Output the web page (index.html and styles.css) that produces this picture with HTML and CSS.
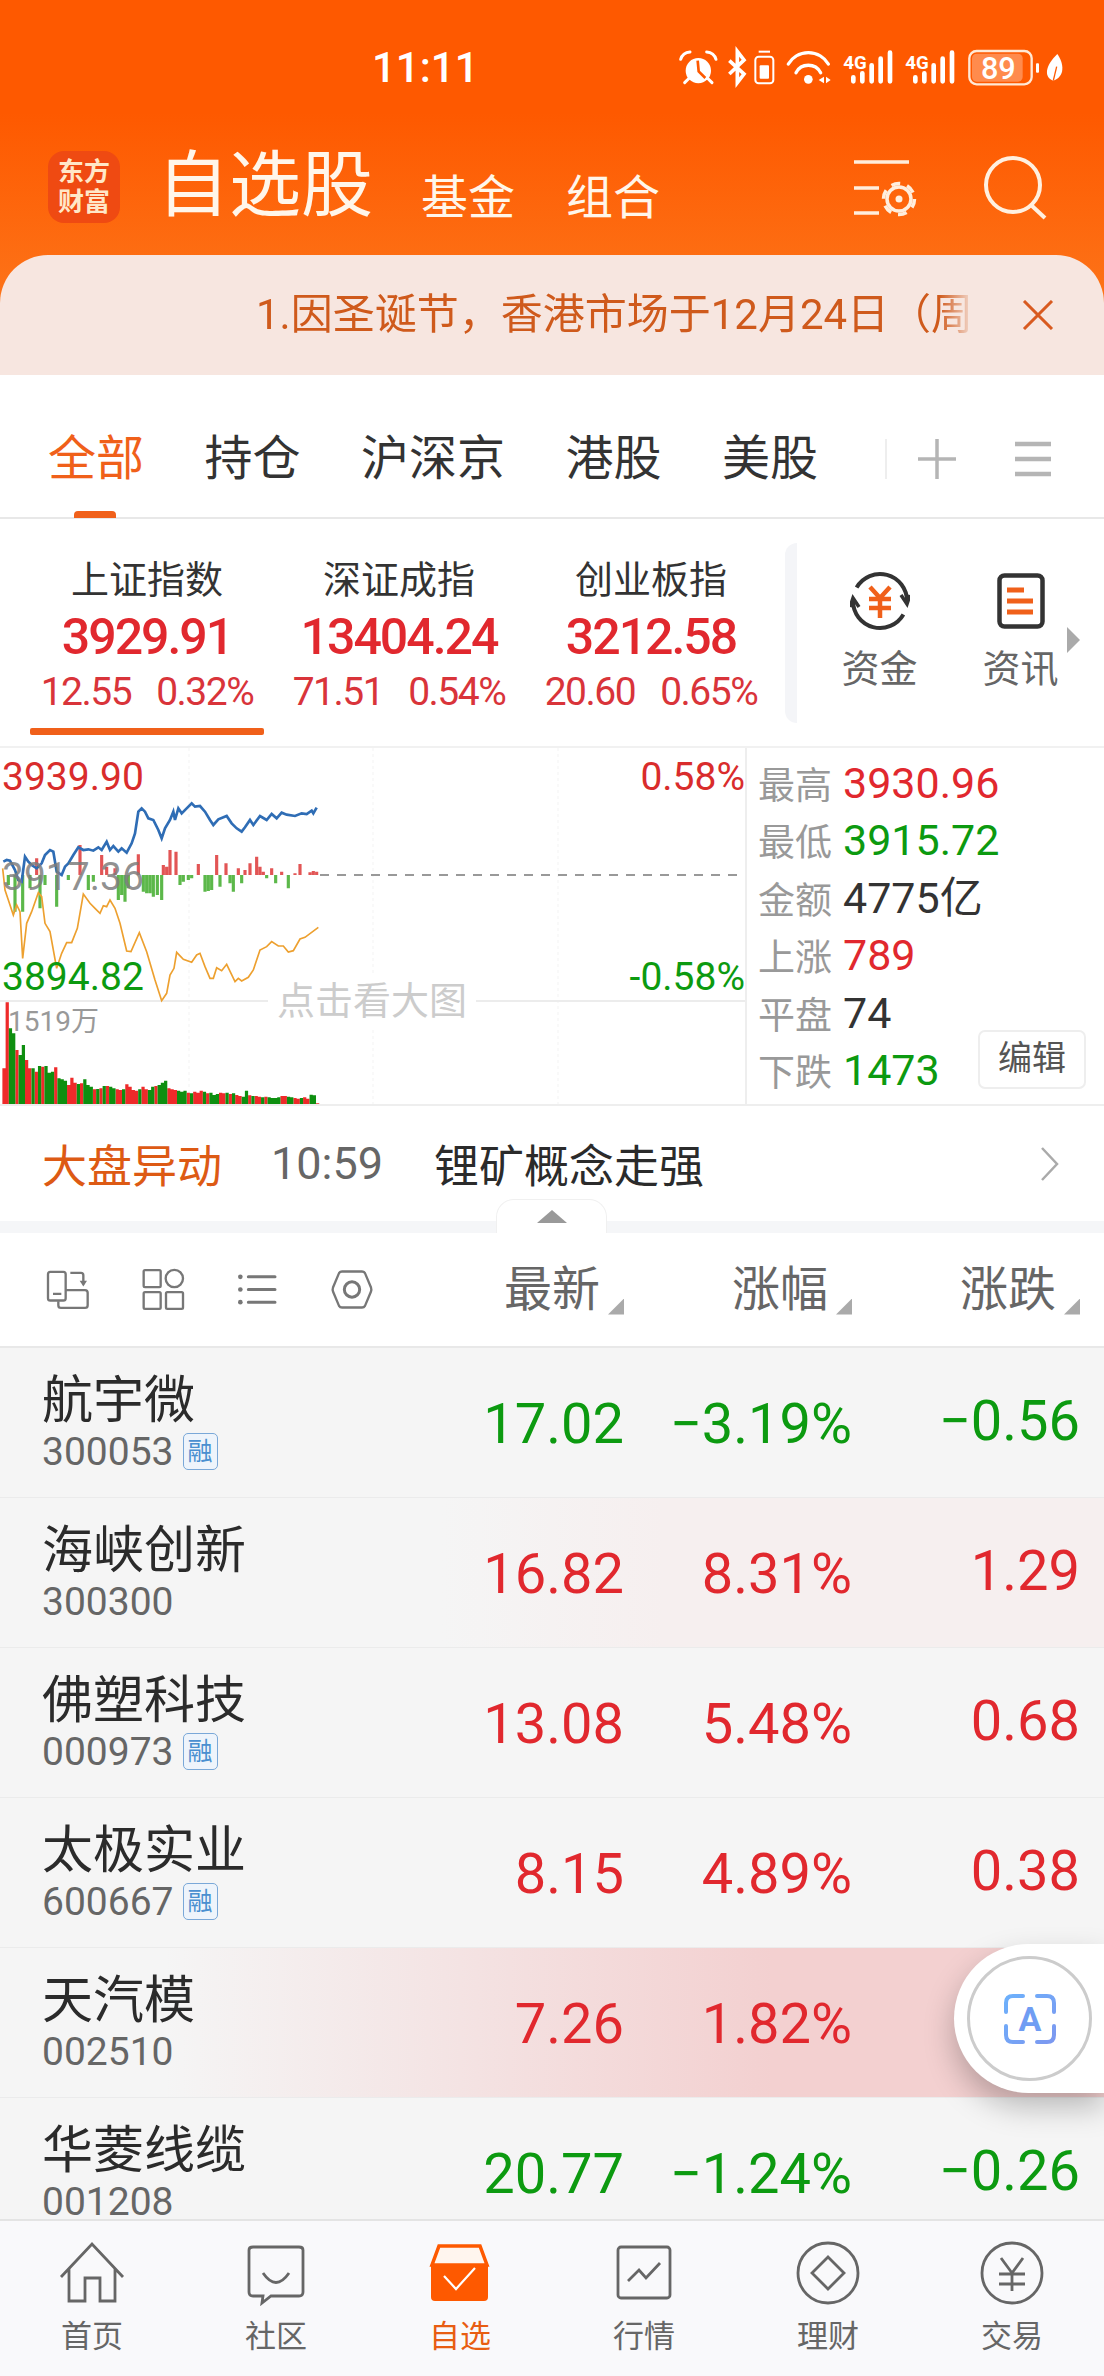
FILE: index.html
```html
<!DOCTYPE html>
<html lang="zh-CN">
<head>
    <meta charset="UTF-8">
    <meta name="viewport" content="width=device-width, initial-scale=1.0">
    <title>自选股</title>
    <link rel="stylesheet" href="styles.css">
</head>
<body>
    <div class="app">
        <header class="top">
            <div class="status">
                <span class="time">11:11</span>
                <svg class="status-icons" viewBox="0 0 1260 180">
                    <!-- alarm -->
                    <circle cx="115" cy="92" r="38" fill="#fff"/>
                    <path d="M113 62 L116 94 L136 114" fill="none" stroke="#fe5900" stroke-width="8"/>
                    <path d="M62 58 Q68 38 90 36 M140 36 Q162 38 168 58 M74 128 L88 114 M156 128 L142 114" fill="none" stroke="#fff" stroke-width="9" stroke-linecap="round"/>
                    <!-- bluetooth + small battery -->
                    <path d="M208 62 L252 102 L232 128 V34 L252 60 L208 102" fill="none" stroke="#fff" stroke-width="11"/>
                    <rect x="286" y="50" width="54" height="80" rx="10" fill="none" stroke="#fff" stroke-width="6"/>
                    <rect x="299" y="76" width="28" height="40" rx="3" fill="#fff"/>
                    <path d="M296 35 H330" stroke="#fff" stroke-width="6"/>
                    <!-- wifi -->
                    <path d="M385 72 A70 70 0 0 1 505 72 M408 98 A42 42 0 0 1 482 98" fill="none" stroke="#fff" stroke-width="10" stroke-linecap="round"/>
                    <circle cx="445" cy="118" r="13" fill="#fff"/>
                    <path d="M492 110 V130 L476 120 Z M498 110 V130 L512 120 Z" fill="#fff"/>
                    <!-- two sims -->
                    <g>
                        <text x="550" y="86" class="sim-label">4G</text>
                        <path d="M580 112 V124 M607 100 V124 M635 76 V124 M662 56 V124 M690 38 V124" stroke="#fff" stroke-width="14" stroke-linecap="round"/>
                    </g>
                    <g transform="translate(186 0)">
                        <text x="550" y="86" class="sim-label">4G</text>
                        <path d="M580 112 V124 M607 100 V124 M635 76 V124 M662 56 V124 M690 38 V124" stroke="#fff" stroke-width="14" stroke-linecap="round"/>
                    </g>
                    <!-- battery -->
                    <rect x="928" y="33" width="187" height="100" rx="22" fill="none" stroke="#ffe9d6" stroke-width="7"/>
                    <rect x="936" y="41" width="152" height="84" rx="14" fill="#ff8b4d"/>
                    <text x="1015" y="116" text-anchor="middle" class="batt-label">89</text>
                    <rect x="1128" y="70" width="9" height="28" rx="3" fill="#fff"/>
                    <path d="M1192 42 C1212 70 1216 110 1180 122 C1150 112 1156 76 1192 42 Z" fill="#fff"/>
                    <path d="M1180 122 L1190 80" stroke="#fe5900" stroke-width="4"/>
                </svg>
            </div>
            <div class="titlebar">
                <div class="logo">东方<br>财富</div>
                <div class="title-tabs">
                    <span class="title-main">自选股</span>
                    <span class="title-sub">基金</span>
                    <span class="title-sub">组合</span>
                </div>
                <svg class="ico-set" width="70" height="62" viewBox="0 0 70 62">
                    <path d="M0 3 H55 M0 29 H25 M0 54 H25" stroke="#ffeedd" stroke-width="3.5"/>
                    <circle cx="45" cy="40" r="12" fill="none" stroke="#ffeedd" stroke-width="3.5"/>
                    <circle cx="45" cy="40" r="15.5" fill="none" stroke="#ffeedd" stroke-width="3.5" stroke-dasharray="9 7.2"/>
                    <circle cx="45" cy="40" r="3.5" fill="#ffeedd"/>
                </svg>
                <svg class="ico-search" width="66" height="66" viewBox="0 0 66 66">
                    <circle cx="30" cy="31" r="27" fill="none" stroke="#fff0e0" stroke-width="4"/>
                    <path d="M48 51 L62 64" stroke="#fff0e0" stroke-width="4"/>
                </svg>
            </div>
            <div class="notice">
                <div class="notice-text">1.因圣诞节，香港市场于12月24日（周</div>
                <svg class="notice-close" width="32" height="30" viewBox="0 0 32 30">
                    <path d="M2 1 L30 29 M30 1 L2 29" stroke="#d85a20" stroke-width="3"/>
                </svg>
            </div>
        </header>

        <nav class="tabs">
            <span class="tab active">全部</span>
            <span class="tab">持仓</span>
            <span class="tab">沪深京</span>
            <span class="tab">港股</span>
            <span class="tab">美股</span>
            <i class="tab-sep"></i>
            <svg class="tab-plus" width="40" height="40" viewBox="0 0 40 40">
                <path d="M20 0 V40 M1 20 H39" stroke="#b5b5b5" stroke-width="3.5"/>
            </svg>
            <svg class="tab-menu" width="36" height="36" viewBox="0 0 36 36">
                <path d="M0 3 H36 M0 18 H36 M0 33 H36" stroke="#b5b5b5" stroke-width="4.5"/>
            </svg>
        </nav>

        <section class="indexes">
            <div class="idx idx-on">
                <div class="idx-name">上证指数</div>
                <div class="idx-num">3929.91</div>
                <div class="idx-sub"><span>12.55</span><span>0.32%</span></div>
            </div>
            <div class="idx">
                <div class="idx-name">深证成指</div>
                <div class="idx-num">13404.24</div>
                <div class="idx-sub"><span>71.51</span><span>0.54%</span></div>
            </div>
            <div class="idx">
                <div class="idx-name">创业板指</div>
                <div class="idx-num">3212.58</div>
                <div class="idx-sub"><span>20.60</span><span>0.65%</span></div>
            </div>
            <i class="idx-sep"></i>
            <div class="quick">
                <svg width="60" height="60" viewBox="0 0 60 60">
                    <path d="M6.6 16.5 A27 27 0 0 1 57 30 M53.4 43.5 A27 27 0 0 1 3 30" fill="none" stroke="#333" stroke-width="4"/>
                    <path d="M51 24 L57 33 L60 24 M9 36 L3 27 L0 36" fill="none" stroke="#333" stroke-width="3.5"/>
                    <path d="M20 16 L30 27 L40 16 M19 28 H41 M19 37 H41 M30 27 V47" fill="none" stroke="#f0601a" stroke-width="4.5"/>
                </svg>
                <span>资金</span>
            </div>
            <div class="quick">
                <svg width="48" height="56" viewBox="0 0 48 56">
                    <rect x="2.5" y="2.5" width="43" height="51" rx="5" fill="none" stroke="#333" stroke-width="4.5"/>
                    <path d="M10 17 H27 M10 28 H36 M10 39 H36" stroke="#f0601a" stroke-width="5"/>
                </svg>
                <span>资讯</span>
            </div>
            <i class="quick-more"></i>
        </section>

        <section class="market">
            <div class="chart">
                <svg class="chart-svg" width="745" height="357" viewBox="0 0 745 357">
                    <path d="M189 0 V357 M373 0 V357 M558 0 V357" stroke="#f3f3f3" stroke-dasharray="3 3"/>
                    <path d="M0 253 H745" stroke="#ececec" stroke-width="2"/>
                    <path d="M320 127 H745" stroke="#999" stroke-width="2" stroke-dasharray="9 8"/>
                    <g transform="translate(0 -8) scale(.33333)">
                        <path id="diff-up" stroke="#e25555" stroke-width="9.5"/>
                        <path id="diff-down" stroke="#5cb84a" stroke-width="9.5"/>
                        <path id="vol-red" stroke="#ee2a2a" stroke-width="9.7"/>
                        <path id="vol-green" stroke="#0e8f10" stroke-width="9.7"/>
                        <polyline class="line-blue" points="10,365 20,360 30,362 45,390 55,420 65,425 75,350 85,365 95,375 110,385 125,370 135,345 150,330 160,335 170,395 185,405 195,380 205,370 220,345 235,322 250,330 265,328 280,332 295,322 305,330 320,305 330,330 340,318 355,335 365,325 380,338 395,310 405,280 415,215 425,205 435,215 445,235 460,240 475,270 485,295 495,265 510,240 520,215 525,240 535,205 545,220 560,205 575,190 585,200 600,198 615,215 630,240 640,255 655,238 680,228 695,250 710,265 725,275 735,262 750,240 760,255 780,228 800,240 815,222 830,235 845,218 860,224 885,228 905,220 920,222 935,212 940,220 950,203"/>
                        <polyline class="line-orange" points="8,385 15,450 25,480 40,525 50,495 60,515 68,655 80,550 95,515 115,458 125,470 135,550 150,575 170,685 185,640 200,608 215,608 232,565 250,462 270,490 285,505 300,520 310,497 320,500 330,480 345,505 360,550 380,633 393,635 418,578 440,635 465,720 485,782 500,760 510,705 522,685 530,637 550,658 575,667 590,645 600,640 615,680 630,715 640,715 650,683 665,692 680,673 705,725 715,715 725,723 745,712 760,690 780,630 800,620 815,605 835,618 850,618 865,636 880,632 900,597 915,592 955,562"/>
                    </g>
                </svg>
                <span class="lab lab-hi">3939.90</span>
                <span class="lab lab-mid">3917.36</span>
                <span class="lab lab-lo">3894.82</span>
                <span class="lab lab-hi-pct">0.58%</span>
                <span class="lab lab-lo-pct">-0.58%</span>
                <span class="lab lab-vol">1519万</span>
                <span class="lab lab-big">点击看大图</span>
            </div>
            <div class="stats">
                <div class="stat"><label>最高</label><b class="up">3930.96</b></div>
                <div class="stat"><label>最低</label><b class="down">3915.72</b></div>
                <div class="stat"><label>金额</label><b>4775亿</b></div>
                <div class="stat"><label>上涨</label><b class="up">789</b></div>
                <div class="stat"><label>平盘</label><b>74</b></div>
                <div class="stat"><label>下跌</label><b class="down">1473</b></div>
                <div class="edit-btn">编辑</div>
            </div>
        </section>

        <div class="alert">
            <span class="alert-tag">大盘异动</span>
            <span class="alert-time">10:59</span>
            <span class="alert-text">锂矿概念走强</span>
            <svg class="alert-arrow" width="20" height="34" viewBox="0 0 20 34">
                <path d="M2 1 L17 17 L2 33" fill="none" stroke="#aaa" stroke-width="2.5"/>
            </svg>
        </div>

        <div class="strip">
            <div class="fold"><i></i></div>
        </div>

        <div class="list-head">
            <div class="head-icons">
                <svg width="50" height="47" viewBox="130 80 150 140">
                    <rect x="145" y="97" width="53" height="86" rx="7"/>
                    <path d="M160 163 H185 M176 185 V197 Q176 205 184 205 H256 Q264 205 264 197 V160 Q264 152 256 152 H198 M212 100 H244 Q251 100 251 107 V134"/>
                    <path class="fill" d="M240 124 H262 L251 141 Z"/>
                </svg>
                <svg width="50" height="47" viewBox="410 80 150 140">
                    <rect x="427" y="92" width="51" height="51" rx="4"/>
                    <circle cx="519" cy="117" r="26"/>
                    <rect x="427" y="158" width="51" height="50" rx="4"/>
                    <rect x="494" y="158" width="51" height="50" rx="4"/>
                </svg>
                <svg width="50" height="47" viewBox="693 80 150 140">
                    <path class="thick" d="M742 112 H822 M742 150 H822 M742 188 H822"/>
                    <circle class="fill" cx="718" cy="112" r="7"/>
                    <circle class="fill" cx="718" cy="150" r="7"/>
                    <circle class="fill" cx="718" cy="188" r="7"/>
                </svg>
                <svg width="50" height="47" viewBox="975 80 150 140">
                    <path d="M1020 96 H1080 Q1086 96 1089 101 L1107 144 Q1109 150 1107 156 L1089 199 Q1086 204 1080 204 H1020 Q1014 204 1011 199 L993 156 Q991 150 993 144 L1011 101 Q1014 96 1020 96 Z"/>
                    <circle class="thick" cx="1050" cy="150" r="23"/>
                </svg>
            </div>
            <div class="head-col">最新<i></i></div>
            <div class="head-col">涨幅<i></i></div>
            <div class="head-col">涨跌<i></i></div>
        </div>

        <div class="list">
            <div class="row">
                <div class="stock"><div class="stock-name">航宇微</div><div class="stock-code">300053<em>融</em></div></div>
                <div class="val down">17.02</div><div class="val down">−3.19%</div><div class="val last down">−0.56</div>
            </div>
            <div class="row row-warm">
                <div class="stock"><div class="stock-name">海峡创新</div><div class="stock-code">300300</div></div>
                <div class="val up">16.82</div><div class="val up">8.31%</div><div class="val last up">1.29</div>
            </div>
            <div class="row">
                <div class="stock"><div class="stock-name">佛塑科技</div><div class="stock-code">000973<em>融</em></div></div>
                <div class="val up">13.08</div><div class="val up">5.48%</div><div class="val last up">0.68</div>
            </div>
            <div class="row">
                <div class="stock"><div class="stock-name">太极实业</div><div class="stock-code">600667<em>融</em></div></div>
                <div class="val up">8.15</div><div class="val up">4.89%</div><div class="val last up">0.38</div>
            </div>
            <div class="row row-hot">
                <div class="stock"><div class="stock-name">天汽模</div><div class="stock-code">002510</div></div>
                <div class="val up">7.26</div><div class="val up">1.82%</div><div class="val last up"></div>
            </div>
            <div class="row">
                <div class="stock"><div class="stock-name">华菱线缆</div><div class="stock-code">001208</div></div>
                <div class="val down">20.77</div><div class="val down">−1.24%</div><div class="val last down">−0.26</div>
            </div>
        </div>

        <nav class="bottom">
            <div class="nav-item">
                <svg width="70" height="66" viewBox="0 0 70 66">
                    <path d="M4 37 L35 4 L66 37 M12 29 V61 H28 V38 H43 V61 H58 V29"/>
                </svg>
                <span>首页</span>
            </div>
            <div class="nav-item">
                <svg width="70" height="66" viewBox="0 0 70 66">
                    <path d="M22 56 H12 Q8 56 8 52 V10 Q8 7 12 7 H58 Q62 7 62 10 V52 Q62 56 58 56 H30 L21 63 Z"/>
                    <path d="M22 33 Q35 52 48 33"/>
                </svg>
                <span>社区</span>
            </div>
            <div class="nav-item on">
                <svg width="70" height="66" viewBox="0 0 70 66">
                    <path d="M14 6 H55 L62 25 H7 Z" fill="#fff5ee" stroke="#fe5900" stroke-width="3.5"/>
                    <path d="M6 24 H63 V57 Q63 61 59 61 H10 Q6 61 6 57 Z" fill="#fe5900" stroke="none"/>
                    <path d="M19 36 L31 49 L50 28" stroke="#fff" stroke-width="2.2"/>
                </svg>
                <span>自选</span>
            </div>
            <div class="nav-item">
                <svg width="70" height="66" viewBox="0 0 70 66">
                    <rect x="9" y="7" width="52" height="51" rx="3"/>
                    <path d="M19 41 L30 30 L37 38 L51 23"/>
                </svg>
                <span>行情</span>
            </div>
            <div class="nav-item">
                <svg width="70" height="66" viewBox="0 0 70 66">
                    <circle cx="35" cy="33" r="30"/>
                    <path d="M35 17 L51 33 L35 49 L19 33 Z"/>
                </svg>
                <span>理财</span>
            </div>
            <div class="nav-item">
                <svg width="70" height="66" viewBox="0 0 70 66">
                    <circle cx="35" cy="33" r="30"/>
                    <path d="M24 18 L35 33 L46 18 M22 34 H48 M22 44 H48 M35 33 V51"/>
                </svg>
                <span>交易</span>
            </div>
        </nav>

        <div class="float-btn">
            <div class="float-ring">
                <svg width="60" height="60" viewBox="0 0 60 60">
                    <defs>
                        <linearGradient id="ai" x1="0" y1="0" x2="1" y2="1">
                            <stop offset="0" stop-color="#6db0fb"/>
                            <stop offset="1" stop-color="#7c98f0"/>
                        </linearGradient>
                    </defs>
                    <path d="M6 23 V14 Q6 7 13 7 H23 M37 7 H47 Q54 7 54 14 V23 M6 37 V46 Q6 53 13 53 H23 M37 53 H47 Q54 53 54 46 V37" fill="none" stroke="url(#ai)" stroke-width="4" stroke-linecap="round"/>
                    <text x="30" y="42" text-anchor="middle" class="ai-letter">A</text>
                </svg>
            </div>
        </div>
    </div>
    <script src="script.js"></script>
</body>
</html>
```

FILE: styles.css
```css
* {
    box-sizing: border-box;
}

html, body {
    margin: 0;
    padding: 0;
}

body {
    width: 1104px;
    height: 2376px;
    overflow: hidden;
    background: #fff;
    color: #333;
    font-family: Roboto, "Noto Sans CJK SC", sans-serif;
}

.app {
    position: relative;
    display: flex;
    flex-direction: column;
    height: 2376px;
    overflow: hidden;
}

.up { color: #e1282e; }
.down { color: #0c9a10; }

/* top orange block */
.top {
    height: 375px;
    background: linear-gradient(180deg, #fe5900 0%, #fe5900 30%, #fd7318 80%);
}

.status {
    display: flex;
    height: 100px;
    padding: 40px 24px 0 372px;
}

.time {
    height: 56px;
    font-size: 42px;
    font-weight: 500;
    line-height: 56px;
    color: #fff;
}

.status-icons {
    width: 420px;
    height: 60px;
    margin-left: auto;
}

.sim-label {
    font-size: 56px;
    font-weight: 700;
    fill: #fff;
}

.batt-label {
    font-size: 92px;
    font-weight: 500;
    fill: #fff;
}

.titlebar {
    display: flex;
    align-items: flex-start;
    height: 155px;
    padding-left: 48px;
}

.logo {
    width: 72px;
    height: 72px;
    margin-top: 51px;
    padding-top: 6px;
    border-radius: 16px;
    background: #ef4a12;
    color: #ffe7c8;
    font-size: 26px;
    font-weight: 700;
    line-height: 30px;
    text-align: center;
}

.title-tabs {
    display: flex;
    align-items: flex-end;
    margin: 46px 0 0 37px;
    color: #fff6ea;
}

.title-main {
    font-size: 72px;
    line-height: 80px;
    margin-right: 48px;
}

.title-sub {
    font-size: 47px;
    line-height: 56px;
    margin-right: 51px;
}

.ico-set {
    margin: 59px 0 0 auto;
}

.ico-search {
    margin: 54px 55px 0 59px;
}

.notice {
    display: flex;
    align-items: center;
    height: 120px;
    padding-left: 256px;
    border-radius: 48px 48px 0 0;
    background: #f7e6e0;
}

.notice-text {
    width: 719px;
    overflow: hidden;
    white-space: nowrap;
    font-size: 42px;
    line-height: 56px;
    color: #cf5a1c;
    -webkit-mask-image: linear-gradient(90deg, #000 95%, transparent 100%);
    mask-image: linear-gradient(90deg, #000 95%, transparent 100%);
}

.notice-close {
    margin-left: 47px;
}

/* tabs */
.tabs {
    display: flex;
    align-items: center;
    gap: 60.5px;
    height: 144px;
    padding: 26px 0 0 48px;
    border-bottom: 2px solid #e8e8e8;
}

.tab {
    position: relative;
    font-size: 48px;
    line-height: 60px;
    color: #333;
}

.tab.active {
    color: #f0601a;
}

.tab.active:after {
    content: '';
    position: absolute;
    left: 26px;
    bottom: -29px;
    width: 42px;
    height: 7px;
    border-radius: 4px 4px 0 0;
    background: #f0601a;
}

.tab-sep {
    width: 2px;
    height: 40px;
    margin-left: 6px;
    background: #eee;
}

.tab-plus {
    margin-left: -30px;
}

.tab-menu {
    margin-left: -2.5px;
}

/* index strip */
.indexes {
    position: relative;
    display: flex;
    height: 229px;
    padding-left: 21px;
    border-bottom: 2px solid #f1f1f1;
    overflow: hidden;
}

.idx {
    position: relative;
    display: flex;
    flex-direction: column;
    align-items: center;
    width: 252px;
    padding-top: 39px;
}

.idx-name {
    font-size: 38px;
    line-height: 44px;
    color: #333;
}

.idx-num {
    margin-top: 10px;
    font-size: 50px;
    font-weight: 500;
    letter-spacing: -2px;
    line-height: 50px;
    color: #e1282e;
}

.idx-sub {
    display: flex;
    gap: 25px;
    margin-top: 10px;
    font-size: 39px;
    letter-spacing: -1.5px;
    line-height: 40px;
    color: #d9343a;
}

.idx-on:after {
    content: '';
    position: absolute;
    left: 9px;
    top: 209px;
    width: 234px;
    height: 7px;
    border-radius: 2px;
    background: #f0601a;
}

.idx-sep {
    flex: none;
    width: 12px;
    height: 180px;
    margin: 24px 0 0 8px;
    border-radius: 12px 0 0 12px;
    background: #f4f5f8;
}

.quick {
    flex: none;
    display: flex;
    flex-direction: column;
    align-items: center;
    width: 141px;
    padding-top: 52px;
    font-size: 38px;
    color: #666;
}

.quick svg {
    height: 60px;
}

.quick span {
    margin-top: 16px;
    line-height: 44px;
}

.idx-sep + .quick {
    margin-left: 12px;
}

.quick-more {
    position: absolute;
    left: 1067px;
    top: 108px;
    width: 0;
    height: 0;
    border-left: 13px solid #aaa;
    border-top: 13px solid transparent;
    border-bottom: 13px solid transparent;
}

/* chart + stats */
.market {
    display: flex;
    height: 358px;
    border-bottom: 2px solid #eee;
}

.chart {
    position: relative;
    width: 745px;
    height: 356px;
    overflow: hidden;
}

.chart-svg {
    display: block;
}

.line-blue {
    fill: none;
    stroke: #2f6db5;
    stroke-width: 8;
}

.line-orange {
    fill: none;
    stroke: #eda02f;
    stroke-width: 5;
}

.lab {
    position: absolute;
    font-size: 39px;
    line-height: 40px;
    white-space: nowrap;
}

.lab-hi { left: 2px; top: 9px; color: #d92c2c; }
.lab-mid { left: 2px; top: 109px; color: rgba(125, 125, 125, 0.85); }
.lab-lo { left: 2px; top: 209px; color: #0c9a10; }
.lab-hi-pct { right: 0; top: 9px; color: #d92c2c; }
.lab-lo-pct { right: 0; top: 209px; color: #0c9a10; }

.lab-vol {
    left: 8px;
    top: 256px;
    font-size: 28px;
    line-height: 36px;
    color: #999;
}

.lab-big {
    left: 268px;
    top: 226px;
    padding: 0 9px;
    background: #fff;
    color: #ccc;
    font-size: 38px;
    line-height: 54px;
}

.stats {
    position: relative;
    flex: 1;
    padding: 6px 0 0 11px;
    border-left: 2px solid #eee;
}

.stat {
    display: flex;
    align-items: center;
    height: 57.5px;
}

.stat label {
    width: 85px;
    font-size: 37px;
    color: #999;
}

.stat b {
    font-size: 43px;
    font-weight: 400;
    line-height: 50px;
}

.edit-btn {
    position: absolute;
    right: 18px;
    bottom: 15px;
    width: 108px;
    height: 59px;
    border: 2px solid #eee;
    border-radius: 7px;
    background: #fff;
    font-size: 34px;
    line-height: 53px;
    text-align: center;
    color: #555;
}

/* market alert */
.alert {
    display: flex;
    align-items: center;
    height: 115px;
    padding-left: 42px;
    font-size: 45px;
}

.alert-tag {
    color: #dd5a14;
}

.alert-time {
    margin-left: 49px;
    color: #666;
}

.alert-text {
    margin-left: 51px;
    color: #2b2b2b;
}

.alert-arrow {
    margin-left: auto;
    margin-right: 44px;
}

.strip {
    position: relative;
    height: 12px;
    background: #f5f6f8;
}

.fold {
    position: absolute;
    left: 496px;
    top: -22px;
    width: 111px;
    height: 34px;
    border: 1px solid #f0f0f0;
    border-bottom: 0;
    border-radius: 18px 18px 0 0;
    background: #fff;
}

.fold i {
    position: absolute;
    left: 40px;
    top: 10px;
    width: 0;
    height: 0;
    border-left: 15px solid transparent;
    border-right: 15px solid transparent;
    border-bottom: 13px solid #999;
}

/* list head */
.list-head,
.row {
    display: grid;
    grid-template-columns: 400px 224px 228px 228px;
}

.list-head {
    align-items: center;
    height: 115px;
    border-bottom: 2px solid #e8e8e8;
}

.head-icons {
    display: flex;
    gap: 44.5px;
    padding-left: 43px;
}

.head-icons svg {
    fill: none;
    stroke: #777;
    stroke-width: 7;
}

.head-icons .fill {
    fill: #777;
    stroke: none;
}

.head-icons .thick {
    stroke-width: 9;
    stroke-linecap: round;
}

.head-col {
    display: flex;
    justify-content: flex-end;
    align-items: flex-end;
    font-size: 48px;
    line-height: 50px;
    color: #666;
}

.head-col i {
    width: 16px;
    height: 16px;
    margin-left: 8px;
    background: #aaa;
    clip-path: polygon(100% 0, 100% 100%, 0 100%);
}

/* stock rows */
.list {
    flex: 1 1 0;
    min-height: 0;
    background: #f5f5f5;
}

.row {
    height: 150px;
    border-bottom: 1px solid #ebebeb;
    background: #f5f5f5;
}

.row-warm {
    background: linear-gradient(90deg, #f5f5f5 40%, #f6efef 60%);
}

.row-hot {
    background: linear-gradient(90deg, #f5f5f5 15%, #f3d0d0 70%);
}

.stock {
    padding: 25px 0 0 42px;
}

.stock-name {
    font-size: 51px;
    line-height: 56px;
    color: #2b2b2b;
}

.stock-code {
    display: flex;
    align-items: center;
    margin-top: 7px;
    font-size: 39px;
    line-height: 32px;
    color: #666;
}

.stock-code em {
    width: 35px;
    height: 37px;
    margin: -3px 0 -2px 9px;
    border: 1px solid #7aa8d8;
    border-radius: 5px;
    background: #eef4fb;
    color: #4a8fd0;
    font-size: 25px;
    font-style: normal;
    line-height: 35px;
    text-align: center;
}

.val {
    align-self: center;
    padding-top: 3px;
    font-size: 56px;
    line-height: 60px;
    text-align: right;
}

.val.last {
    padding: 0 0 3px 0;
    min-height: 63px;
}

/* bottom nav */
.bottom {
    position: relative;
    flex: none;
    display: flex;
    height: 157px;
    border-top: 2px solid #e4e4e4;
    background: #f9f9fb;
}

.nav-item {
    display: flex;
    flex-direction: column;
    align-items: center;
    width: 184px;
    padding-top: 19px;
    font-size: 31px;
    color: #666;
}

.nav-item svg {
    fill: none;
    stroke: #666;
    stroke-width: 2.8;
}

.nav-item span {
    margin-top: 13px;
    line-height: 36px;
}

.nav-item.on {
    color: #e85d12;
}

/* floating button */
.float-btn {
    position: absolute;
    right: 0;
    top: 1944px;
    width: 150px;
    height: 149px;
    padding: 12px 0 0 13px;
    border-radius: 75px 0 0 75px;
    background: #fff;
    box-shadow: 0 14px 30px rgba(0, 0, 0, 0.25);
}

.float-ring {
    display: flex;
    align-items: center;
    justify-content: center;
    width: 125px;
    height: 125px;
    border: 3px solid #ccc;
    border-radius: 50%;
}

.ai-letter {
    font-size: 34px;
    font-weight: 700;
    fill: #6f9df3;
}
```

FILE: script.js
```js
// volume bars: y of the bar top, in the chart's own units
var volTops = [985,787,865,880,930,945,915,960,985,985,995,978,980,978,998,995,982,1015,1018,1022,1035,1013,1028,1032,1030,1018,1035,1040,1048,1047,1045,1038,1038,1040,1045,1048,1050,1048,1033,1040,1050,1052,1048,1040,1048,1050,1040,1038,1035,1028,1022,1045,1048,1050,1052,1055,1052,1058,1060,1055,1058,1052,1055,1060,1058,1065,1062,1058,1060,1058,1062,1060,1065,1068,1070,1052,1066,1068,1068,1070,1072,1070,1072,1074,1074,1072,1068,1068,1070,1072,1074,1076,1074,1072,1076,1064,1066,1090];
var volColors = 'rrggrggrrgrgrgggrgggrrrgrgggrgrgrggrrgrrrrgrrggrgggrrrgggrgrrrgrgggrrgrgrrggrgrrgrggggrrggrrgrrggr';

// capital flow bars around the zero line: [x, height]
var flowUp = [[110,50],[240,90],[305,60],[320,25],[345,20],[415,62],[490,30],[500,25],[510,75],[528,70],[595,33],[650,60],[678,35],[715,20],[735,15],[750,35],[770,55],[780,25],[790,10],[815,20],[845,10],[885,5],[900,33],[930,8],[940,12],[950,10]];
var flowDown = [[25,30],[45,110],[68,110],[90,40],[120,100],[135,30],[170,95],[205,15],[265,45],[280,20],[355,75],[365,60],[375,80],[385,40],[430,50],[440,55],[450,55],[460,65],[472,60],[485,75],[540,30],[550,20],[565,15],[575,10],[615,50],[625,48],[635,45],[660,35],[690,25],[700,50],[725,25],[800,10],[827,25],[865,40]];

var ZERO = 405;
var BOTTOM = 1098;
var red = '';
var green = '';

for (var i = 0; i < volTops.length; i++) {
    var x = 12 + i * 9.7;
    var seg = 'M' + x + ' ' + BOTTOM + 'V' + volTops[i];
    if (volColors.charAt(i) === 'r') {
        red += seg;
    } else {
        green += seg;
    }
}

function flowPath(list, dir) {
    return list.map(function (b) {
        return 'M' + b[0] + ' ' + ZERO + 'V' + (ZERO + dir * b[1]);
    }).join('');
}

document.getElementById('vol-red').setAttribute('d', red);
document.getElementById('vol-green').setAttribute('d', green);
document.getElementById('diff-up').setAttribute('d', flowPath(flowUp, -1));
document.getElementById('diff-down').setAttribute('d', flowPath(flowDown, 1));
```
